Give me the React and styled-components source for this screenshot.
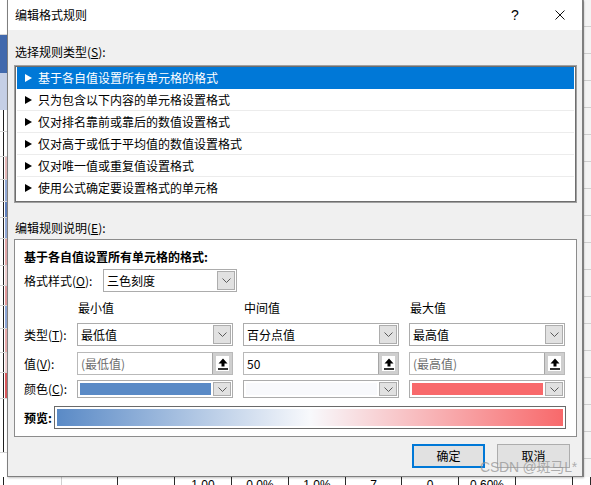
import React from "react";
import styled, { createGlobalStyle } from "styled-components";

const GlobalStyle = createGlobalStyle`
  body {
    margin: 0;
    background: #fff;
    font-family: "Noto Sans CJK SC", "Noto Sans", sans-serif;
  }
`;

const rules = [
  "基于各自值设置所有单元格的格式",
  "只为包含以下内容的单元格设置格式",
  "仅对排名靠前或靠后的数值设置格式",
  "仅对高于或低于平均值的数值设置格式",
  "仅对唯一值或重复值设置格式",
  "使用公式确定要设置格式的单元格",
];

const leftCells = [
  { h: 35, tint: "#fff", plain: true },
  { h: 38, tint: "#4169ad", full: true },
  { h: 37, tint: "#c5cfe6", full: true },
  { h: 22, tint: "#fff" },
  { h: 25, tint: "#fff" },
  { h: 23, tint: "#e7b9b9" },
  { h: 22, tint: "#93a9d6" },
  { h: 16, tint: "#5f80bf" },
  { h: 21, tint: "#93a9d6" },
  { h: 27, tint: "#e3a6a7" },
  { h: 20, tint: "#f0cfd0" },
  { h: 20, tint: "#e3999b" },
  { h: 23, tint: "#8ea6d6" },
  { h: 24, tint: "#e8a9aa" },
  { h: 20, tint: "#f2d2d3" },
  { h: 26, tint: "#d9585b" },
  { h: 54, tint: "#fff" },
];

const bottomCells = ["", "", "", "1.00", "0.0%", "1.0%", "7", "0", "0.60%", "", ""];

function Chevron() {
  return (
    <svg width="9" height="5" viewBox="0 0 9 5">
      <polyline points="0.5,0.5 4.5,4.5 8.5,0.5" fill="none" stroke="#5a5a5a" strokeWidth="1" />
    </svg>
  );
}

function UploadIcon() {
  return (
    <svg width="10" height="12" viewBox="0 0 10 12">
      <polygon points="5,0.5 9.5,5.5 6.5,5.5 6.5,8.5 3.5,8.5 3.5,5.5 0.5,5.5" fill="#000" />
      <rect x="0" y="10.2" width="10" height="1.6" fill="#000" />
    </svg>
  );
}

function Combo({ value, swatch, small, width }) {
  return (
    <ComboBox $small={small} $width={width}>
      {swatch ? <Swatch $color={swatch} /> : <ComboText>{value}</ComboText>}
      <DropBtn>
        <Chevron />
      </DropBtn>
    </ComboBox>
  );
}

function ValueInput({ value, muted }) {
  return (
    <InputBox>
      <ComboText $muted={muted}>{value}</ComboText>
      <UpBtn>
        <UploadIcon />
      </UpBtn>
    </InputBox>
  );
}

export default function App() {
  return (
    <Page>
      <GlobalStyle />
      <LeftStrip>
        {leftCells.map((c, i) => (
          <LeftCell key={i} $h={c.h} $tint={c.tint} $plain={c.plain} $full={c.full} />
        ))}
      </LeftStrip>

      <Dialog>
        <TitleBar>
          <Title>编辑格式规则</Title>
          <HelpBtn>?</HelpBtn>
          <CloseBtn>
            <svg width="10" height="10" viewBox="0 0 10 10">
              <path d="M0.5 0.5 L9.5 9.5 M9.5 0.5 L0.5 9.5" stroke="#111" strokeWidth="1" />
            </svg>
          </CloseBtn>
        </TitleBar>

        <Body>
          <SectionLabel>
            选择规则类型(<u>S</u>):
          </SectionLabel>
          <ListBox>
            {rules.map((r, i) => (
              <ListRow key={r} $selected={i === 0} $last={i === rules.length - 1}>
                <svg width="7" height="8" viewBox="0 0 7 8">
                  <polygon points="0,0 7,4 0,8" fill={i === 0 ? "#fff" : "#000"} />
                </svg>
                <span>{r}</span>
              </ListRow>
            ))}
          </ListBox>

          <SectionLabel $top={17}>
            编辑规则说明(<u>E</u>):
          </SectionLabel>
          <Panel>
            <Heading>基于各自值设置所有单元格的格式:</Heading>
            <StyleRow>
              <StyleLabel>
                格式样式(<u>O</u>):
              </StyleLabel>
              <Combo value="三色刻度" width={134} />
            </StyleRow>

            <FieldRow $gap={8}>
              <span />
              <ColHead>最小值</ColHead>
              <ColHead>中间值</ColHead>
              <ColHead>最大值</ColHead>
            </FieldRow>

            <FieldRow $gap={7}>
              <FieldLabel>
                类型(<u>T</u>):
              </FieldLabel>
              <Combo value="最低值" />
              <Combo value="百分点值" />
              <Combo value="最高值" />
            </FieldRow>

            <FieldRow $gap={6}>
              <FieldLabel>
                值(<u>V</u>):
              </FieldLabel>
              <ValueInput value="(最低值)" muted />
              <ValueInput value="50" />
              <ValueInput value="(最高值)" muted />
            </FieldRow>

            <FieldRow $gap={5}>
              <FieldLabel>
                颜色(<u>C</u>):
              </FieldLabel>
              <Combo swatch="#5a8ac6" small />
              <Combo swatch="#f8f9fc" small />
              <Combo swatch="#f8696b" small />
            </FieldRow>

            <PreviewRow>
              <PreviewLabel>预览:</PreviewLabel>
              <PreviewBar>
                <Gradient />
              </PreviewBar>
            </PreviewRow>
          </Panel>

          <Footer>
            <Button $primary>确定</Button>
            <Button>取消</Button>
          </Footer>
        </Body>
      </Dialog>

      <RightStrip />

      <BottomStrip>
        {bottomCells.map((t, i) => (
          <BottomCell key={i} $light={i === 0}>
            {t}
          </BottomCell>
        ))}
      </BottomStrip>

      <Watermark>CSDN @斑马L*</Watermark>
    </Page>
  );
}

const Page = styled.div`
  position: relative;
  width: 591px;
  height: 485px;
  overflow: hidden;
  display: grid;
  grid-template-columns: 7px 576px 1fr;
  grid-template-rows: 477px 1fr;
  background: #fff;
  font-size: 12px;
  color: #000;
`;

const LeftStrip = styled.div`
  display: flex;
  flex-direction: column;
  overflow: hidden;
`;

const LeftCell = styled.div`
  flex: none;
  box-sizing: border-box;
  height: ${(p) => p.$h}px;
  border-bottom: 1px solid ${(p) => (p.$full ? "transparent" : "#d6d6d6")};
  background: ${(p) =>
    p.$plain || p.$full
      ? p.$tint
      : `linear-gradient(to right, #fff 0 3px, #1f1f1f 3px 4px, #fff 4px 5px, ${p.$tint} 5px 7px)`};
`;

const Dialog = styled.div`
  box-sizing: border-box;
  display: flex;
  flex-direction: column;
  background: #f0f0f0;
  border: 1px solid #7f7f7f;
  border-top: none;
  box-shadow: 1px 1px 2px rgba(0, 0, 0, 0.25);
  position: relative;
  z-index: 1;
`;

const TitleBar = styled.div`
  height: 30px;
  display: flex;
  align-items: center;
  background: #fff;
  padding-left: 7px;
`;

const Title = styled.div`
  flex: 1;
  line-height: 16px;
`;

const HelpBtn = styled.div`
  width: 46px;
  text-align: center;
  font-family: "Liberation Sans", sans-serif;
  font-size: 14px;
  line-height: 16px;
`;

const CloseBtn = styled.div`
  width: 44px;
  display: flex;
  justify-content: center;
  align-items: center;
`;

const Body = styled.div`
  display: flex;
  flex-direction: column;
  padding: 14px 5px 0 6px;
`;

const SectionLabel = styled.div`
  line-height: 16px;
  padding-left: 1px;
  margin-top: ${(p) => p.$top || 0}px;
`;

const ListBox = styled.div`
  margin-top: 5px;
  border: 1px solid #a0a0a0;
  box-shadow: inset 0 0 0 1px #6e6e6e;
  background: #fff;
  padding: 1px 2px 3px 2px;
`;

const ListRow = styled.div`
  box-sizing: border-box;
  height: 22px;
  display: flex;
  align-items: center;
  gap: 6px;
  padding-left: 8px;
  background: ${(p) => (p.$selected ? "#0078d7" : "#fff")};
  color: ${(p) => (p.$selected ? "#fff" : "#000")};
  border-bottom: 1px solid ${(p) => (p.$last || p.$selected ? "transparent" : "#ececec")};
  line-height: 16px;
`;

const Panel = styled.div`
  margin-top: 3px;
  background: #fff;
  border: 1px solid #8c8c8c;
  padding: 9px 9px 7px 9px;
`;

const Heading = styled.div`
  font-weight: bold;
  line-height: 16px;
`;

const StyleRow = styled.div`
  display: flex;
  align-items: center;
  margin-top: 4px;
`;

const StyleLabel = styled.div`
  width: 79px;
  line-height: 16px;
`;

const FieldRow = styled.div`
  display: grid;
  grid-template-columns: 43px repeat(3, 156px);
  column-gap: 10px;
  align-items: center;
  margin-top: ${(p) => p.$gap}px;
`;

const FieldLabel = styled.div`
  white-space: nowrap;
  line-height: 16px;
`;

const ColHead = styled.div`
  line-height: 16px;
  padding-left: 1px;
`;

const ComboBox = styled.div`
  box-sizing: border-box;
  display: flex;
  align-items: stretch;
  width: ${(p) => (p.$width ? `${p.$width}px` : "auto")};
  height: ${(p) => (p.$small ? 18 : 23)}px;
  background: #fff;
  border: 1px solid #acacac;
`;

const ComboText = styled.div`
  flex: 1;
  display: flex;
  align-items: center;
  padding-left: 3px;
  line-height: 16px;
  color: ${(p) => (p.$muted ? "#6d6d6d" : "#000")};
`;

const DropBtn = styled.div`
  box-sizing: border-box;
  width: 18px;
  margin: 1px;
  display: flex;
  align-items: center;
  justify-content: center;
  background: #e1e1e1;
  border: 1px solid #adadad;
`;

const Swatch = styled.div`
  flex: 1;
  margin: 2px 1px 2px 2px;
  background: ${(p) => p.$color};
`;

const InputBox = styled.div`
  box-sizing: border-box;
  display: flex;
  height: 23px;
  background: #fff;
  border: 1px solid #b9b9b9;
`;

const UpBtn = styled.div`
  box-sizing: border-box;
  width: 20px;
  display: flex;
  align-items: center;
  justify-content: center;
  background: #fff;
  border-left: 1px solid #a6a6a6;
  box-shadow: inset 0 0 0 3px #cfcfcf;
`;

const PreviewRow = styled.div`
  display: flex;
  align-items: center;
  margin-top: 8px;
`;

const PreviewLabel = styled.div`
  width: 30px;
  font-weight: bold;
  line-height: 16px;
`;

const PreviewBar = styled.div`
  box-sizing: border-box;
  flex: 1;
  height: 23px;
  margin-right: 1px;
  border: 1px solid #6a6a6a;
  padding: 2px;
  display: flex;
`;

const Gradient = styled.div`
  flex: 1;
  background: linear-gradient(to right, #5a8ac6 0%, #f8f9fc 50%, #f8696b 100%);
`;

const Footer = styled.div`
  display: flex;
  justify-content: flex-end;
  gap: 12px;
  margin-top: 7px;
  padding-right: 7px;
`;

const Button = styled.div`
  box-sizing: border-box;
  width: 73px;
  height: 24px;
  display: flex;
  align-items: center;
  justify-content: center;
  background: #e1e1e1;
  border: ${(p) => (p.$primary ? "2px solid #0078d7" : "1px solid #adadad")};
  line-height: 16px;
`;

const RightStrip = styled.div`
  border-left: 1px solid #9a9a9a;
  background: repeating-linear-gradient(to bottom, #f4f4f4 0 26px, #cfcfcf 26px 27px);
`;

const BottomStrip = styled.div`
  grid-column: 1 / -1;
  display: grid;
  grid-template-columns: 62px 56px 57px 57px 57px 57px 56px 57px 57px 57px 1fr;
  overflow: hidden;
`;

const BottomCell = styled.div`
  box-sizing: border-box;
  height: 8px;
  overflow: hidden;
  border-right: 1px solid ${(p) => (p.$light ? "#d0d0d0" : "#2a2a2a")};
  background: ${(p) => (p.$light ? "linear-gradient(to right, #fff 0 3px, #1f1f1f 3px 4px, #fff 4px)" : "#fff")};
  font-family: "Liberation Sans", sans-serif;
  font-size: 12px;
  line-height: 12px;
  padding-top: 2px;
  text-align: center;
`;

const Watermark = styled.div`
  position: absolute;
  right: 14px;
  top: 459px;
  z-index: 2;
  font-family: "Liberation Sans", "Noto Sans CJK SC", sans-serif;
  font-size: 14px;
  line-height: 16px;
  color: rgba(150, 150, 150, 0.75);
  letter-spacing: -0.2px;
`;
